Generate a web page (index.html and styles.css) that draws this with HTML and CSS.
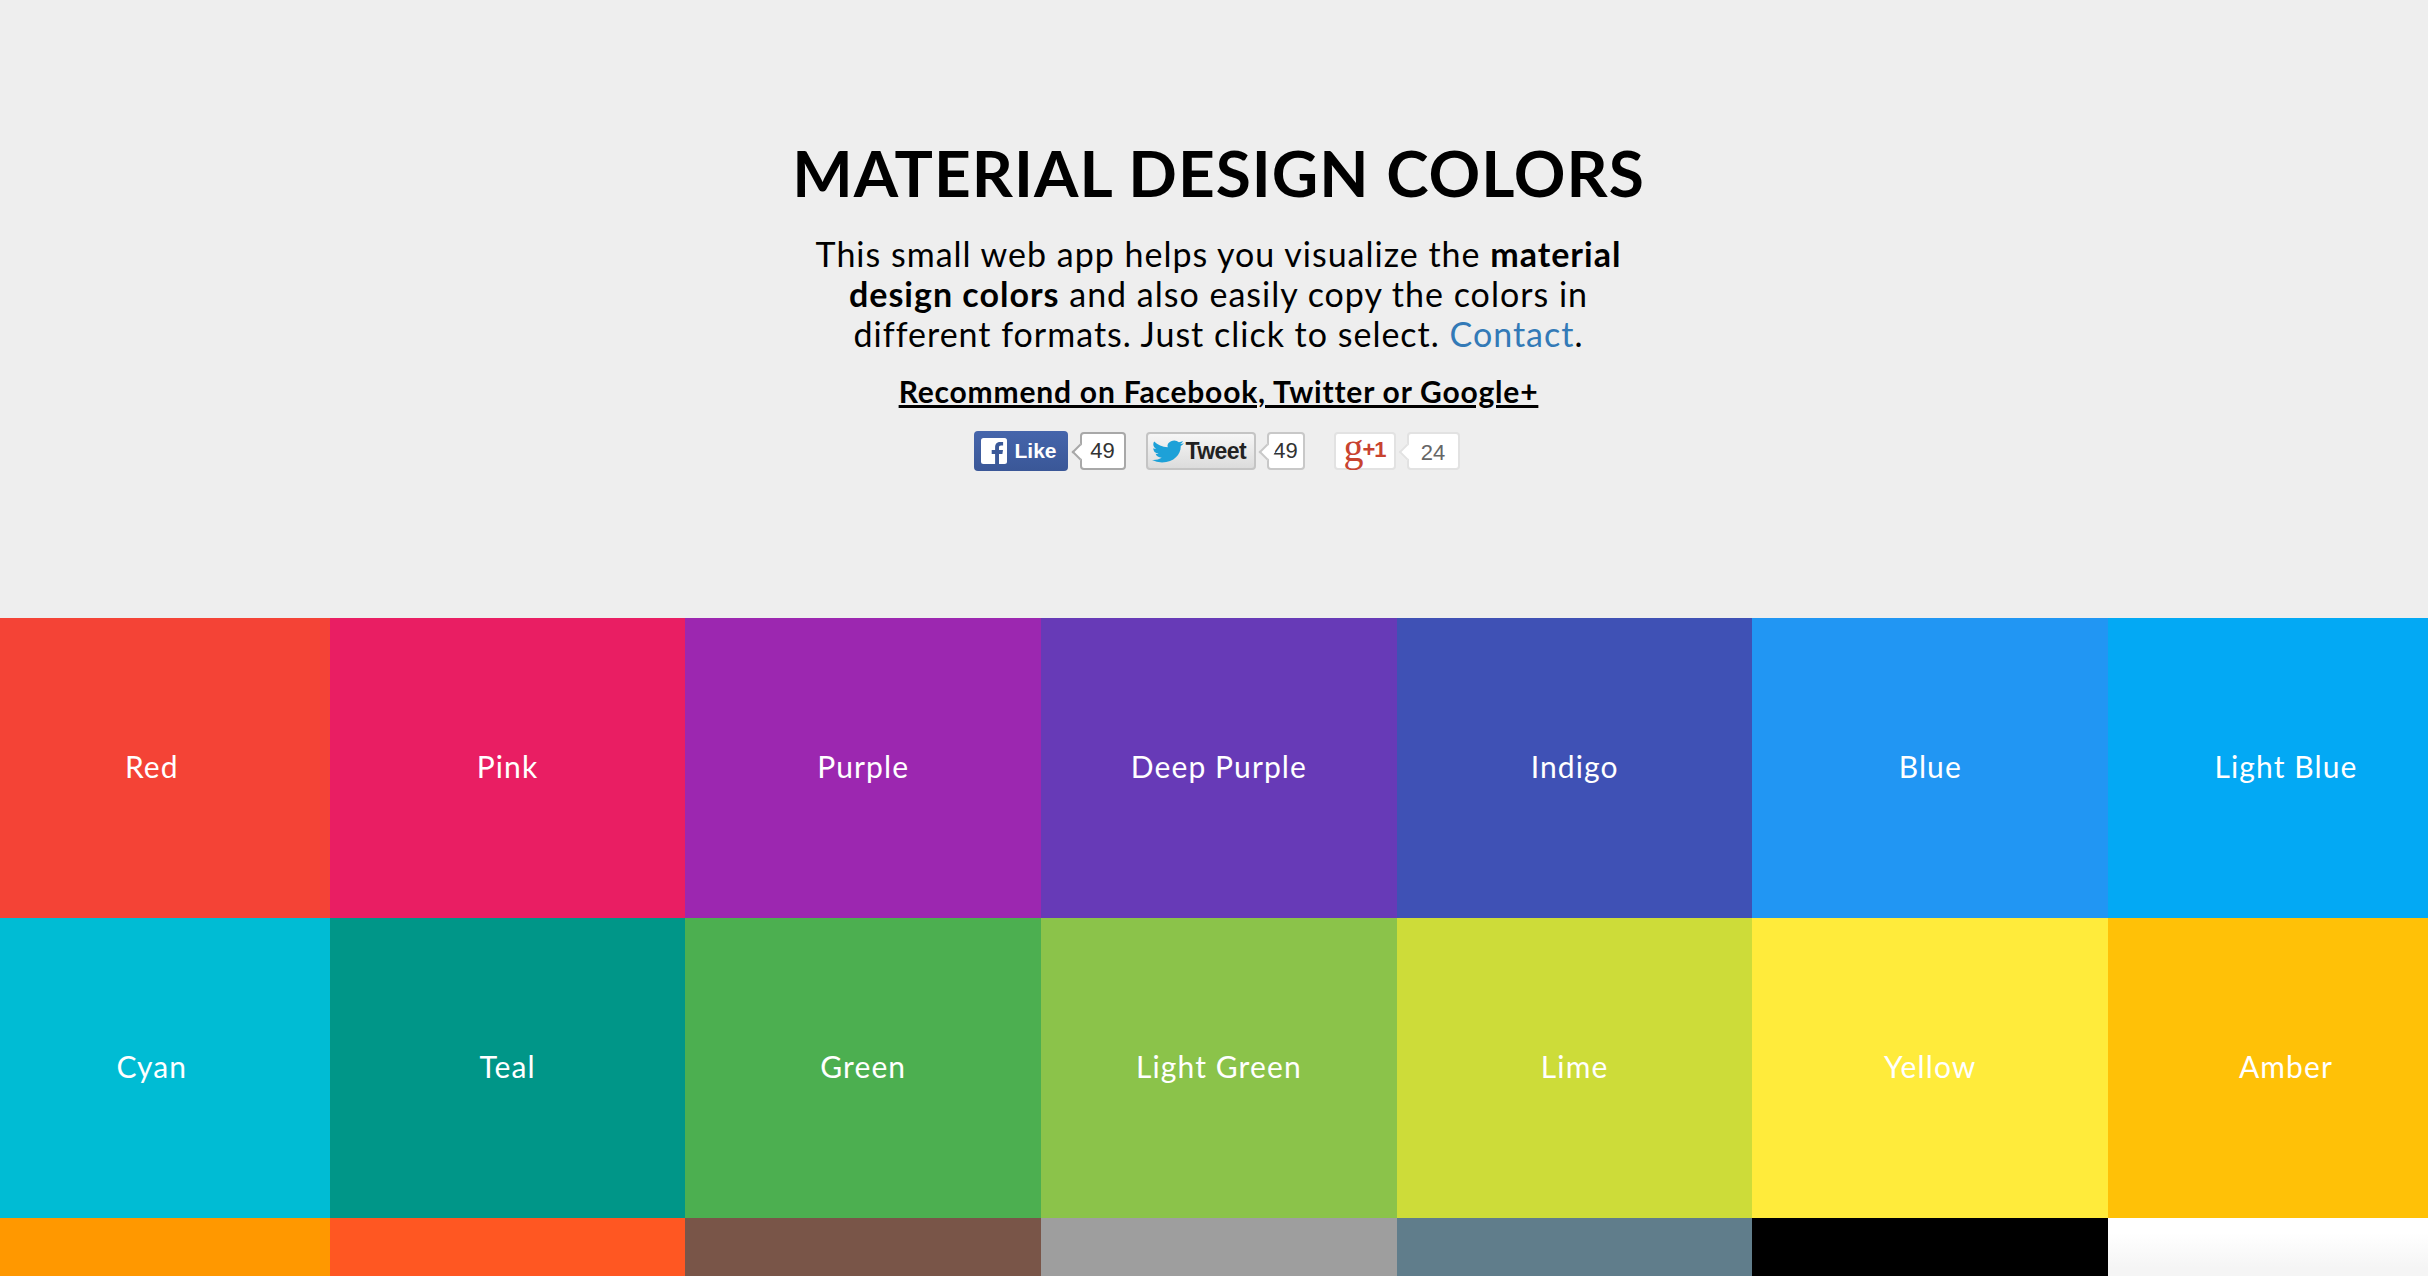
FILE: index.html
```html
<!DOCTYPE html>
<html lang="en">
  <head>
    <meta charset="UTF-8" />
    <title>Material Design Colors</title>
    <link rel="stylesheet" href="styles.css">
  </head>
  <body>
    <!-- Intro -->
    <header class="intro">
      <h1>MATERIAL DESIGN COLORS</h1>
      <p class="lead">This small web app helps you visualize the <strong>material design colors</strong> and also easily copy the colors in different formats. Just click to select. <a href="#">Contact</a>.</p>
      <p class="recommend">Recommend on Facebook, Twitter or Google+</p>
      <div class="share">
        <div class="share-item share-fb">
          <a class="btn btn-fb" href="#">
            <svg class="fb-icon" viewBox="0 0 26 26"><rect width="26" height="26" rx="2.5" fill="#fff"/><path d="M18 26V16h3.400l.6-4h-4V9.600c0-1.200.4-2 2.100-2H22.100V4.100C21.700 4 20.500 4 19.200 4c-3 0-5.100 1.800-5.100 5.200V12h-3.400v4h3.400v10z" fill="#3b5998"/></svg>
            <span>Like</span>
          </a>
          <span class="count count-fb">49</span>
        </div>
        <div class="share-item share-tw">
          <a class="btn btn-tw" href="#">
            <svg class="tw-icon" viewBox="0 0 24 24" preserveAspectRatio="none"><path d="M23.950 4.570a10 10 0 0 1-2.820.770 4.960 4.960 0 0 0 2.160-2.720 9.900 9.900 0 0 1-3.120 1.180 4.920 4.920 0 0 0-8.380 4.480C7.690 8.090 4.070 6.130 1.640 3.160a4.820 4.820 0 0 0-.66 2.470c0 1.710.87 3.210 2.190 4.100a4.900 4.900 0 0 1-2.230-.61v.06a4.920 4.920 0 0 0 3.950 4.830 5 5 0 0 1-2.210.08 4.940 4.940 0 0 0 4.600 3.420A9.870 9.870 0 0 1 0 19.540a14 14 0 0 0 7.560 2.210c9.050 0 14-7.500 14-13.980 0-.21 0-.42-.02-.63a9.940 9.940 0 0 0 2.410-2.570z" fill="#1da1d8"/></svg>
            <span>Tweet</span>
          </a>
          <span class="count count-tw">49</span>
        </div>
        <div class="share-item share-gp">
          <a class="btn btn-gp" href="#"><span class="gp-g">g</span><span class="gp-plus">+1</span></a>
          <span class="count count-gp">24</span>
        </div>
      </div>
    </header>

    <!-- Colors -->
    <main class="colors">
      <div class="tile red">Red</div>
      <div class="tile pink">Pink</div>
      <div class="tile purple">Purple</div>
      <div class="tile deep-purple">Deep Purple</div>
      <div class="tile indigo">Indigo</div>
      <div class="tile blue">Blue</div>
      <div class="tile light-blue">Light Blue</div>
      <div class="tile cyan">Cyan</div>
      <div class="tile teal">Teal</div>
      <div class="tile green">Green</div>
      <div class="tile light-green">Light Green</div>
      <div class="tile lime">Lime</div>
      <div class="tile yellow">Yellow</div>
      <div class="tile amber">Amber</div>
      <div class="tile orange"></div>
      <div class="tile deep-orange"></div>
      <div class="tile brown"></div>
      <div class="tile grey"></div>
      <div class="tile blue-grey"></div>
      <div class="tile black"></div>
      <div class="tile white"></div>
    </main>
  </body>
</html>
```
FILE: styles.css
```css
* {
  margin: 0;
  padding: 0;
  box-sizing: border-box;
}

html,
body {
  height: 100%;
  overflow: hidden;
}

body {
  font-family: Lato, "Open Sans", sans-serif;
  background: #eee;
  color: #000;
}

.intro {
  height: 618px;
  padding: 134px 0 0 9px;
  text-align: center;
}

.intro h1 {
  font-size: 64px;
  line-height: 78px;
  font-weight: 700;
  letter-spacing: 1px;
}

.lead {
  width: 840px;
  margin: 22px auto 0;
  font-size: 34px;
  line-height: 40px;
  letter-spacing: 1px;
}

.lead a {
  color: #337ab7;
  text-decoration: none;
}

.recommend {
  margin-top: 17px;
  font-size: 30px;
  line-height: 40px;
  font-weight: 700;
  letter-spacing: 0.8px;
  text-decoration: underline;
}

/* Share buttons */
.share {
  display: flex;
  justify-content: center;
  margin-top: 20px;
  padding-right: 4px;
  font-family: "Liberation Sans", Arial, sans-serif;
}

.share-item {
  display: flex;
  align-items: center;
  height: 40px;
}

.share-fb {
  margin-right: 20px;
}

.share-tw {
  margin-right: 29px;
}

.btn {
  display: flex;
  align-items: center;
  height: 38px;
  border-radius: 4px;
  text-decoration: none;
}

.btn-fb {
  width: 94px;
  height: 40px;
  padding-left: 7px;
  background: linear-gradient(#4565ab, #3a5797);
  color: #fff;
  font-size: 21px;
  font-weight: 700;
}

.fb-icon {
  width: 26px;
  height: 26px;
  margin-right: 8px;
}

.btn-tw {
  width: 110px;
  padding-left: 4px;
  border: 2px solid #c4c4c4;
  background: linear-gradient(#f6f6f6, #dcdcdc);
  color: #222;
  font-size: 23px;
  font-weight: 700;
  letter-spacing: -0.6px;
}

.tw-icon {
  width: 32px;
  height: 27px;
  margin-right: 2px;
}

.btn-gp {
  width: 62px;
  padding-left: 8px;
  border: 2px solid #e2e2e2;
  background: #fff;
}

.gp-g {
  font-family: "Liberation Serif", serif;
  font-size: 40px;
  line-height: 30px;
  margin-top: -7px;
  color: #c8432f;
}

.gp-plus {
  margin-left: -1px;
  margin-top: -3px;
  font-size: 22px;
  font-weight: 700;
  letter-spacing: -1px;
  color: #c8432f;
}

.count {
  position: relative;
  display: flex;
  align-items: center;
  justify-content: center;
  height: 38px;
  border: 2px solid #a8a8a8;
  border-radius: 4px;
  background: #fff;
  font-size: 22px;
  color: #333;
}

.count::before {
  content: "";
  position: absolute;
  left: -8px;
  top: 12px;
  width: 10px;
  height: 10px;
  background: #fff;
  border-left: 2px solid #a8a8a8;
  border-bottom: 2px solid #a8a8a8;
  transform: rotate(45deg);
}

.count-fb {
  width: 46px;
  margin-left: 12px;
}

.count-tw {
  width: 38px;
  margin-left: 11px;
  border-color: #c8c8c8;
}

.count-tw::before {
  border-color: #c8c8c8;
}

.count-gp {
  width: 53px;
  margin-left: 11px;
  padding-top: 4px;
  border-color: #e2e2e2;
  color: #666;
}

.count-gp::before {
  border-color: #e2e2e2;
}

/* Color tiles */
.colors {
  display: grid;
  grid-template-columns: repeat(7, 355.7px);
  grid-auto-rows: 299.8px;
  margin-left: -26px;
  width: 2490px;
}

.tile {
  display: flex;
  align-items: center;
  justify-content: center;
  padding-bottom: 3px;
  color: #fff;
  font-size: 30px;
  letter-spacing: 1.1px;
}

.red { background: #f44336; }
.pink { background: #e91e63; }
.purple { background: #9c27b0; }
.deep-purple { background: #673ab7; }
.indigo { background: #3f51b5; }
.blue { background: #2196f3; }
.light-blue { background: #03a9f4; }
.cyan { background: #00bcd4; }
.teal { background: #009688; }
.green { background: #4caf50; }
.light-green { background: #8bc34a; }
.lime { background: #cddc39; }
.yellow { background: #ffeb3b; }
.amber { background: #ffc107; }
.orange { background: #ff9800; }
.deep-orange { background: #ff5722; }
.brown { background: #795548; }
.grey { background: #9e9e9e; }
.blue-grey { background: #607d8b; }
.black { background: #000; }
.white { background: linear-gradient(#fff, #fff 15px, #f5f5f5 50px); }
```
